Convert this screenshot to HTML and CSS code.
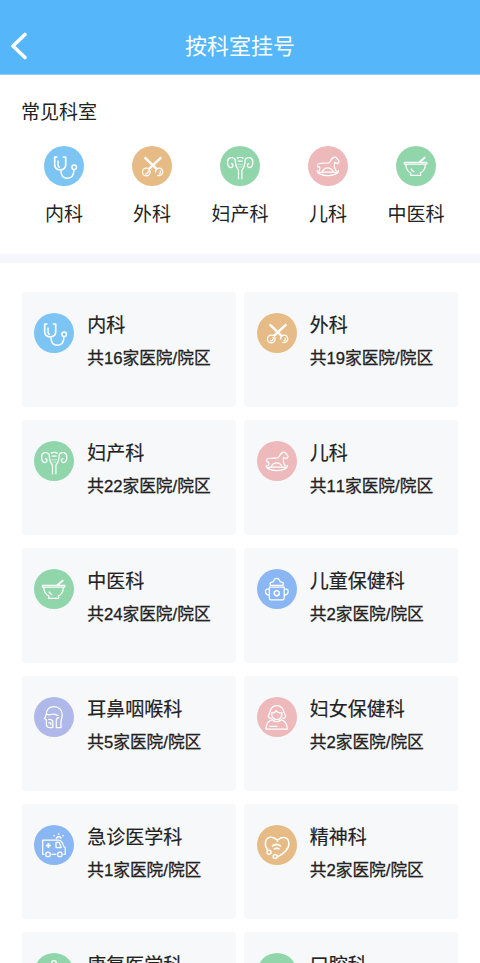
FILE: index.html
```html
<!DOCTYPE html>
<html lang="zh-CN">
  <head>
    <meta charset="UTF-8" />
    <meta name="viewport" content="width=device-width, initial-scale=1.0" />
    <title>按科室挂号</title>
    <link rel="stylesheet" href="styles.css">
  </head>
  <body>
    <!-- 图标 -->
    <svg class="icon-defs" aria-hidden="true">
      <symbol id="i-neike" viewBox="0 0 40 40">
        <path d="M13.5 11H10.7V18.5C10.7 21.8 13 23.8 16.2 23.8S21.7 21.8 21.7 18.5V11H18.8" stroke-width="1.7" />
        <path d="M14 14.5V19.3C14 20.5 14.8 21.2 16 21.4M17 24.5C17 29.5 19.3 32.2 23.4 32.2C27.6 32.2 29.8 29.2 30 24" stroke-width="1.5" />
        <circle cx="30.2" cy="21.3" r="2.3" stroke-width="1.5" />
      </symbol>
      <symbol id="i-waike" viewBox="0 0 40 40">
        <path d="M12.6 11.3L24.6 22.8M29.3 11.3L17 22.8" stroke-width="2.4" />
        <circle cx="14.3" cy="26" r="3.8" />
        <path d="M16.3 24.3C16.7 26.7 15.3 28 13.2 27.8M25.2 29.3C29 30.4 31.5 27.8 30.6 24.8C30 23 28.2 22 26 22.3C24.4 22.8 23.4 24.2 23.5 26.5M28 24.6C29 26 28.2 27.8 26.6 28" />
      </symbol>
      <symbol id="i-fuchan" viewBox="0 0 40 40">
        <path d="M15.2 13.2C12.5 10.5 7.6 11 7.6 16C7.6 19.5 8.6 21.5 10.8 21.5C13.8 21.5 13.5 17.2 11 17.6M25.2 13.2C27.9 10.5 32.8 11 32.8 16C32.8 19.5 31.8 21.5 29.6 21.5C26.6 21.5 26.9 17.2 29.4 17.6" />
        <path d="M15.2 13.2C15.2 18 15.8 21 18.5 24.2V33.2M25.2 13.2C25.2 18 24.6 21 21.9 24.2V33.2M16.8 12.4C19 11.2 21.4 11.2 23.6 12.4M17.8 15.2H22.6" />
        <path d="M17.5 18.5H23M18.4 21H22" opacity=".4" />
      </symbol>
      <symbol id="i-erke" viewBox="0 0 40 40">
        <path d="M11.2 21.3C8.6 21 9.2 17.6 11.4 17.5C14.5 16.8 17.5 17.3 20.7 16.8C23.6 15.8 22.3 11.2 27.2 11.2C29 11.6 29.6 13.4 31.2 15.4L29.7 17.6L26.4 16.4C26.8 19 25.8 20.5 26.8 22.2L28.4 25.4M11.2 20.5C12.5 22 12 23.3 11 25.2M14.2 26C15.4 22.6 17.2 21.8 19.8 21.8S23.9 22.6 25.2 26" />
        <path d="M9.2 24.6C9 26.5 11.5 26.6 14.2 26.2H25.4C28.3 26.6 30.6 25.9 30.4 24.3C31.2 31 9.5 31.4 9.2 24.6Z" />
      </symbol>
      <symbol id="i-zhongyi" viewBox="0 0 40 40">
        <path d="M8.4 16.3H30.8V18H8.4ZM9.8 18.2C10 23 12 25.8 15.2 27.2M29.4 18.2C29.2 23 27.2 25.8 24 27.2M14.3 29.4H24.9M15 27L14.3 29.4M24.2 27L24.9 29.4M15 22.6C16 24.6 17.2 25.5 18.4 26" />
        <path d="M29.2 11.2L23.3 16.3" stroke-width="1.9" />
      </symbol>
      <symbol id="i-ertong" viewBox="0 0 40 40">
        <path d="M13.2 16.3V13.8L16.2 12.7L17.5 10.2C18.5 9.2 20.8 9.2 21.8 10.2L23.2 12.7L26.2 13.8V16.3Z" />
        <path d="M12.4 18.2H27.2V29C27.2 30.3 26.5 30.9 25.4 30.9H14.2C13.1 30.9 12.4 30.3 12.4 29ZM12.2 20.4C8.8 19.6 8.2 21.3 8.5 23.2C8.8 25.3 10.2 26 12.2 26.2M27.4 20.4C30.8 19.6 31.4 21.3 31.1 23.2C30.8 25.3 29.4 26 27.4 26.2" />
        <path d="M19.8 21.3L22.2 22.8V25.5L19.8 27L17.3 25.5V22.8Z" stroke-width="1.5" />
      </symbol>
      <symbol id="i-erbihou" viewBox="0 0 40 40">
        <path d="M12.2 18C12.2 12.5 15.5 9.5 20 9.5C25 9.5 28.2 13 28.2 17.8C28.2 21 27 22.5 27 25.5V30.7H22.3V23.2C22.3 21.3 23.2 20.5 25.2 20.5M12.5 17C14.5 18 15.5 18.3 17.6 17.5C20.2 16.4 22.7 17.7 24.5 18.8" />
        <path d="M12.2 18L10.5 21.5L12.3 22.8L12.5 28.3C12.7 30.2 13.8 30.7 16 30.5H18.8V25C18.8 23.2 17.5 22.2 14.2 22.5M14.3 26C16.5 25.2 17.2 26 16.8 28.2" />
      </symbol>
      <symbol id="i-funv" viewBox="0 0 40 40">
        <path d="M14.7 21.3C12.8 21.4 11.3 20.5 11.2 19C13.4 16.5 12.6 8.7 19.8 8.7S26.5 16.5 28.8 19C28.7 20.5 27.2 21.4 25.3 21.3" />
        <path d="M14.7 15.8C17.6 16.3 18.6 14.7 19 13.7C20.3 15.7 22.8 16.2 25 15.8C25.3 20.5 23 22.6 19.8 22.6S14.4 20.5 14.7 15.8ZM15.8 22.7C11.5 23.7 9 26 9 32H30.3C30.3 26 27.8 23.7 23.8 22.7M15.8 22.7C16.7 25.2 22.8 25.2 23.8 22.7M12.4 29.4H20.5" />
      </symbol>
      <symbol id="i-jizhen" viewBox="0 0 40 40">
        <path d="M10.5 29.4H8.7V15H24.7C28 15 28.8 18.5 29.8 21.5L31.3 23V29.4H29.3M17.4 29.4H22.2M22 17.3H25.2L27.2 22.5H22Z" />
        <path d="M14.4 18V23M11.9 20.5H16.9" stroke-width="1.7" />
        <circle cx="14" cy="29.4" r="2.3" />
        <circle cx="25.8" cy="29.4" r="2.3" />
        <path d="M22.4 13.8C22.4 11 27 11 27 13.8M24.6 9.8V8.2M20.6 11.2L19.6 10.3M28.4 11.2L29.6 10.3" stroke-width="1.5" />
      </symbol>
      <symbol id="i-jingshen" viewBox="0 0 40 40">
        <path d="M10.5 24.8C6.6 19.5 8.4 12.6 13.5 12.2C16.6 12 18.5 13.3 20.4 15.3C22.6 13 24.4 12 27.2 12.5C32.6 13.5 33.5 20 29.2 25.2C27 27.8 24 30.3 20.8 31.6M20.4 15.3V17" stroke-width="1.5" />
        <circle cx="12" cy="27.2" r="2" stroke-width="1.5" />
        <circle cx="18.2" cy="31.6" r="2" stroke-width="1.5" />
        <path d="M15 21.3C17.8 18.8 21.2 18.8 24 21.3M17 24.4C18.7 22.8 20.8 22.8 22.5 24.4" stroke-width="1.6" />
      </symbol>
      <symbol id="i-kangfu" viewBox="0 0 40 40">
        <circle cx="20" cy="10" r="2.3" />
        <path d="M20 13V23L26 30M14 17H26" />
      </symbol>
      <symbol id="i-kouqiang" viewBox="0 0 40 40">
        <path d="M20 14C15 10 11 13 12 19C13 23 14 31 17 30C19 29 18 24 20 24S21 29 23 30C26 31 27 23 28 19C29 13 25 10 20 14Z" />
      </symbol>
    </svg>

    <div class="header">
      <svg class="back-arrow" viewBox="0 0 18 28"><path d="M15 2.5L3 14L15 25.5" /></svg>
      <div class="title">按科室挂号</div>
    </div>

    <div class="common">
      <div class="common-title">常见科室</div>
      <div class="common-list">
        <div class="common-item"><svg class="icon blue"><use href="#i-neike" /></svg><span>内科</span></div>
        <div class="common-item"><svg class="icon orange"><use href="#i-waike" /></svg><span>外科</span></div>
        <div class="common-item"><svg class="icon green"><use href="#i-fuchan" /></svg><span>妇产科</span></div>
        <div class="common-item"><svg class="icon pink"><use href="#i-erke" /></svg><span>儿科</span></div>
        <div class="common-item"><svg class="icon green"><use href="#i-zhongyi" /></svg><span>中医科</span></div>
      </div>
    </div>

    <!-- 全部科室 -->
    <div class="dept-list">
      <div class="dept">
        <svg class="icon blue"><use href="#i-neike" /></svg>
        <div class="dept-info"><div class="dept-name">内科</div><div class="dept-count">共16家医院/院区</div></div>
      </div>
      <div class="dept">
        <svg class="icon orange"><use href="#i-waike" /></svg>
        <div class="dept-info"><div class="dept-name">外科</div><div class="dept-count">共19家医院/院区</div></div>
      </div>
      <div class="dept">
        <svg class="icon green"><use href="#i-fuchan" /></svg>
        <div class="dept-info"><div class="dept-name">妇产科</div><div class="dept-count">共22家医院/院区</div></div>
      </div>
      <div class="dept">
        <svg class="icon pink"><use href="#i-erke" /></svg>
        <div class="dept-info"><div class="dept-name">儿科</div><div class="dept-count">共11家医院/院区</div></div>
      </div>
      <div class="dept">
        <svg class="icon green"><use href="#i-zhongyi" /></svg>
        <div class="dept-info"><div class="dept-name">中医科</div><div class="dept-count">共24家医院/院区</div></div>
      </div>
      <div class="dept">
        <svg class="icon royal"><use href="#i-ertong" /></svg>
        <div class="dept-info"><div class="dept-name">儿童保健科</div><div class="dept-count">共2家医院/院区</div></div>
      </div>
      <div class="dept">
        <svg class="icon purple"><use href="#i-erbihou" /></svg>
        <div class="dept-info"><div class="dept-name">耳鼻咽喉科</div><div class="dept-count">共5家医院/院区</div></div>
      </div>
      <div class="dept">
        <svg class="icon pink"><use href="#i-funv" /></svg>
        <div class="dept-info"><div class="dept-name">妇女保健科</div><div class="dept-count">共2家医院/院区</div></div>
      </div>
      <div class="dept">
        <svg class="icon royal"><use href="#i-jizhen" /></svg>
        <div class="dept-info"><div class="dept-name">急诊医学科</div><div class="dept-count">共1家医院/院区</div></div>
      </div>
      <div class="dept">
        <svg class="icon orange"><use href="#i-jingshen" /></svg>
        <div class="dept-info"><div class="dept-name">精神科</div><div class="dept-count">共2家医院/院区</div></div>
      </div>
      <div class="dept">
        <svg class="icon green"><use href="#i-kangfu" /></svg>
        <div class="dept-info"><div class="dept-name">康复医学科</div></div>
      </div>
      <div class="dept">
        <svg class="icon green"><use href="#i-kouqiang" /></svg>
        <div class="dept-info"><div class="dept-name">口腔科</div></div>
      </div>
    </div>
  </body>
</html>
```
FILE: styles.css
```css
* {
  box-sizing: border-box;
}

body {
  margin: 0;
  height: 963px;
  overflow: hidden;
  background-color: #ffffff;
  color: #222222;
  font-family: "Liberation Sans", "Noto Sans CJK SC", sans-serif;
  font-kerning: none;
}

.icon-defs {
  display: none;
}

.header {
  display: grid;
  grid-template-columns: 60px 1fr 60px;
  align-items: center;
  height: 75px;
  padding-top: 19px;
  background-color: #55b6f9;
  border-bottom: 1px solid #8fcffb;
  color: #ffffff;
}

.back-arrow {
  width: 18px;
  height: 28px;
  margin-left: 10px;
  margin-bottom: 1px;
  fill: none;
  stroke: #ffffff;
  stroke-width: 3.6;
  stroke-linecap: round;
  stroke-linejoin: round;
}

.title {
  font-size: 22px;
  line-height: 33px;
  text-align: center;
}

/* 常见科室 */
.common {
  height: 188px;
  padding-top: 24px;
  border-bottom: 9px solid #f5f6fb;
}

.common-title {
  padding-left: 21px;
  font-size: 19px;
  line-height: 28px;
}

.common-list {
  display: grid;
  grid-template-columns: repeat(5, 88px);
  padding: 19px 20px 0;
}

.common-item {
  display: flex;
  flex-direction: column;
  align-items: center;
  gap: 15px;
  font-size: 19px;
  line-height: 28px;
}

.icon {
  flex: none;
  width: 40px;
  height: 40px;
  border-radius: 50%;
  fill: none;
  stroke: #ffffff;
  stroke-width: 1.25;
  stroke-linejoin: round;
}

.blue {
  background-color: #7bc4f3;
}

.orange {
  background-color: #e6bb85;
}

.green {
  background-color: #91d6ab;
}

.pink {
  background-color: #edb9bb;
}

.royal {
  background-color: #8ab7f3;
}

.purple {
  background-color: #afb9e9;
}

/* 科室卡片 */
.dept-list {
  display: grid;
  grid-template-columns: 214px 214px;
  grid-auto-rows: 115px;
  gap: 13px 8.5px;
  padding: 29px 21.75px 0;
}

.dept {
  display: flex;
  gap: 13px;
  padding: 21.4px 0 0 12.5px;
  background-color: #f7f8fa;
  border-radius: 4px;
}

.dept-info {
  margin-top: -1px;
}

.dept-name {
  font-size: 19px;
  line-height: 28px;
  -webkit-text-stroke: 0.2px #222222;
}

.dept-count {
  margin-top: 6px;
  font-size: 16.7px;
  line-height: 26px;
  white-space: nowrap;
  -webkit-text-stroke: 0.3px #222222;
}
```
